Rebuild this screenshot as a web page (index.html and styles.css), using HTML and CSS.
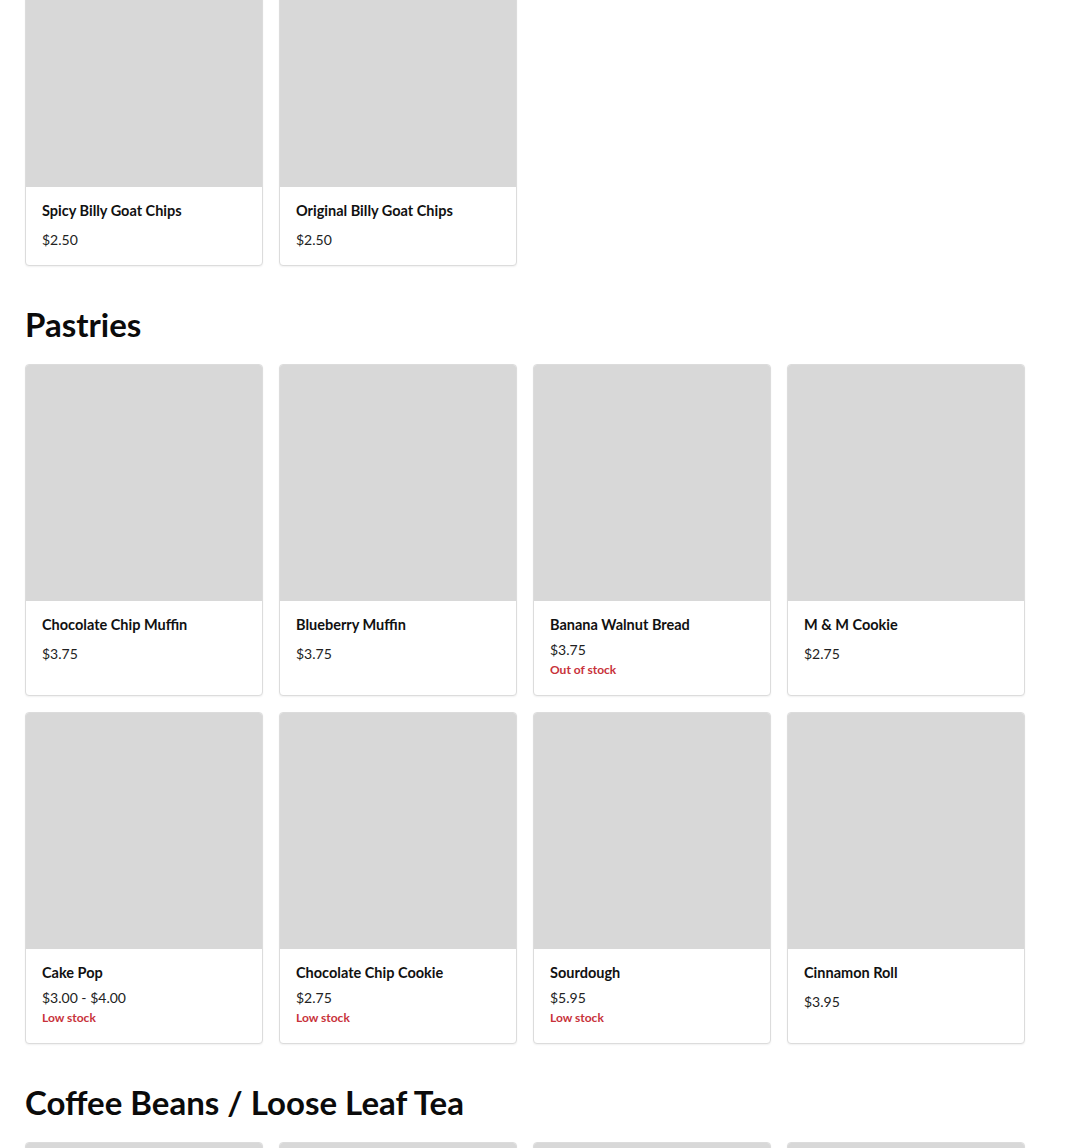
FILE: index.html
```html
<!DOCTYPE html>
<html lang="en">
<head>
    <meta charset="UTF-8">
    <meta name="viewport" content="width=device-width, initial-scale=1.0">
    <title>Menu</title>
    <link rel="stylesheet" href="styles.css">
</head>
<body>
    <div id="menu">
        <!-- Snacks (scrolled partly out of view) -->
        <div class="product-grid product-grid--first">
            <div class="product-card">
                <div class="product-image"></div>
                <div class="product-info">
                    <div class="product-name">Spicy Billy Goat Chips</div>
                    <div class="product-price">$2.50</div>
                </div>
            </div>
            <div class="product-card">
                <div class="product-image"></div>
                <div class="product-info">
                    <div class="product-name">Original Billy Goat Chips</div>
                    <div class="product-price">$2.50</div>
                </div>
            </div>
        </div>

        <h2 class="category-title">Pastries</h2>
        <div class="product-grid">
            <div class="product-card">
                <div class="product-image"></div>
                <div class="product-info">
                    <div class="product-name">Chocolate Chip Muffin</div>
                    <div class="product-price">$3.75</div>
                </div>
            </div>
            <div class="product-card">
                <div class="product-image"></div>
                <div class="product-info">
                    <div class="product-name">Blueberry Muffin</div>
                    <div class="product-price">$3.75</div>
                </div>
            </div>
            <div class="product-card">
                <div class="product-image"></div>
                <div class="product-info">
                    <div class="product-name">Banana Walnut Bread</div>
                    <div class="product-price has-stock">$3.75</div>
                    <div class="stock-label">Out of stock</div>
                </div>
            </div>
            <div class="product-card">
                <div class="product-image"></div>
                <div class="product-info">
                    <div class="product-name">M &amp; M Cookie</div>
                    <div class="product-price">$2.75</div>
                </div>
            </div>
            <div class="product-card">
                <div class="product-image"></div>
                <div class="product-info">
                    <div class="product-name">Cake Pop</div>
                    <div class="product-price has-stock">$3.00 - $4.00</div>
                    <div class="stock-label">Low stock</div>
                </div>
            </div>
            <div class="product-card">
                <div class="product-image"></div>
                <div class="product-info">
                    <div class="product-name">Chocolate Chip Cookie</div>
                    <div class="product-price has-stock">$2.75</div>
                    <div class="stock-label">Low stock</div>
                </div>
            </div>
            <div class="product-card">
                <div class="product-image"></div>
                <div class="product-info">
                    <div class="product-name">Sourdough</div>
                    <div class="product-price has-stock">$5.95</div>
                    <div class="stock-label">Low stock</div>
                </div>
            </div>
            <div class="product-card">
                <div class="product-image"></div>
                <div class="product-info">
                    <div class="product-name">Cinnamon Roll</div>
                    <div class="product-price">$3.95</div>
                </div>
            </div>
        </div>

        <h2 class="category-title">Coffee Beans / Loose Leaf Tea</h2>
        <div class="product-grid">
            <div class="product-card"><div class="product-image"></div></div>
            <div class="product-card"><div class="product-image"></div></div>
            <div class="product-card"><div class="product-image"></div></div>
            <div class="product-card"><div class="product-image"></div></div>
        </div>
    </div>
</body>
</html>
```

FILE: styles.css
```css
html, body {
    margin: 0;
    padding: 0;
    background-color: #ffffff;
    font-family: 'Lato', sans-serif;
    color: #111111;
    overflow: hidden;
}
#menu {
    padding: 0 25px;
}
.product-grid {
    display: grid;
    grid-template-columns: repeat(4, 238px);
    gap: 16px;
}
.product-grid--first {
    margin-top: -50px; /* page is scrolled down a bit */
}
.category-title {
    margin: 38px 0 20px;
    font-size: 33px;
    line-height: 40px;
    font-weight: 700;
    color: #0b0b0b;
}
.product-card {
    border: 1px solid #dcdcdc;
    border-radius: 4px;
    overflow: hidden;
    background: #fff;
    box-shadow: 0 1px 2px rgba(0, 0, 0, 0.06);
}
.product-image {
    height: 236px;
    background-color: #d8d8d8;
}
.product-info {
    padding: 15px 16px 16px;
}
.product-name {
    font-size: 14.5px;
    line-height: 18px;
    font-weight: 700;
}
.product-price {
    margin-top: 11px;
    font-size: 14px;
    line-height: 18px;
    color: #222;
}
.product-price.has-stock {
    margin-top: 7px;
}
.stock-label {
    margin-top: 1px;
    font-size: 12px;
    line-height: 19px;
    font-weight: 700;
    color: #c8323a;
}
```
